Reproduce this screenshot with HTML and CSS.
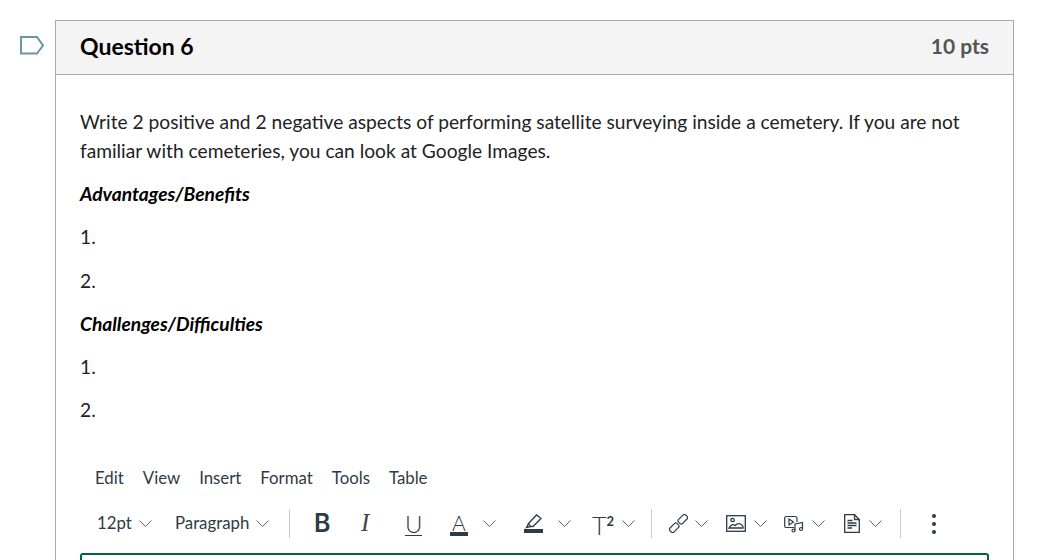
FILE: index.html
```html
<!DOCTYPE html>
<html lang="en">
<head>
  <meta charset="UTF-8" />
  <title>Question 6</title>
  <link rel="stylesheet" href="styles.css">
</head>
<body>
  <div class="page">
    <div class="flag-col">
      <svg class="flag" width="26" height="21" viewBox="0 0 26 21">
        <path d="M2 2H18L24 10.500L18 18.500H2Z" fill="#fff" stroke="#6d93ad" stroke-width="2"/>
      </svg>
    </div>
    <div class="question">
      <div class="question-header">
        <h2>Question 6</h2>
        <span class="pts">10 pts</span>
      </div>
      <div class="question-body">
        <p>Write 2 positive and 2 negative aspects of performing satellite surveying inside a cemetery. If you are not familiar with cemeteries, you can look at Google Images.</p>
        <p class="head"><strong><em>Advantages/Benefits</em></strong></p>
        <p>1.</p>
        <p>2.</p>
        <p class="head"><strong><em>Challenges/Difficulties</em></strong></p>
        <p>1.</p>
        <p>2.</p>

        <div class="menubar">
          <span>Edit</span><span>View</span><span>Insert</span><span>Format</span><span>Tools</span><span>Table</span>
        </div>

        <div class="toolbar">
          <div class="tb-group">
            <span class="tb-select size">12pt <svg class="chev" viewBox="0 0 13 7"><path d="M.5.5L6.500 6.500L12.500.5"/></svg></span>
            <span class="tb-select para">Paragraph <svg class="chev" viewBox="0 0 13 7"><path d="M.5.5L6.500 6.500L12.500.5"/></svg></span>
          </div>
          <div class="tb-group format">
            <span class="tb-btn bold">B</span>
            <span class="tb-btn ital">I</span>
            <span class="tb-btn under"><span class="under-mark">U</span></span>
            <span class="tb-btn color">
              <span class="color-mark">A</span>
              <svg class="chev" viewBox="0 0 13 7"><path d="M.5.5L6.500 6.500L12.500.5"/></svg>
            </span>
            <span class="tb-btn marker">
              <svg width="19" height="19" viewBox="0 0 19 19">
                <path d="M4.500 9.500L12.500 1L17 4.500L9 12.500H6.500ZM4.500 9.500L6.500 12.500L2.500 13.500Z" fill="none" stroke="#2d3b45" stroke-width="1.300"/>
                <rect y="15" width="19" height="4" fill="#2d3b45"/>
              </svg>
              <svg class="chev" viewBox="0 0 13 7"><path d="M.5.5L6.500 6.500L12.500.5"/></svg>
            </span>
            <span class="tb-btn sup">
              <span class="sup-mark">T<sup>2</sup></span>
              <svg class="chev" viewBox="0 0 13 7"><path d="M.5.5L6.500 6.500L12.500.5"/></svg>
            </span>
          </div>
          <div class="tb-group insert">
            <span class="tb-btn link">
              <svg width="19" height="19" viewBox="0 0 19 19" fill="none" stroke="#2d3b45" stroke-width="1.200">
                <rect x="-5" y="-2.800" width="10" height="5.600" rx="1.600" transform="translate(5.200 13.800) rotate(-45)"/>
                <rect x="-5" y="-2.800" width="10" height="5.600" rx="1.600" transform="translate(13.800 5.200) rotate(-45)"/>
              </svg>
              <svg class="chev" viewBox="0 0 13 7"><path d="M.5.5L6.500 6.500L12.500.5"/></svg>
            </span>
            <span class="tb-btn image">
              <svg width="20" height="17" viewBox="0 0 20 17" fill="none" stroke="#2d3b45" stroke-width="1.300">
                <rect x=".7" y=".7" width="18.600" height="15.600"/>
                <circle cx="6.500" cy="5" r="1.700"/>
                <path d="M3 13C5 9.500 7 9 9 10.500C12 7.500 15 8 17 11.500V13Z"/>
              </svg>
              <svg class="chev" viewBox="0 0 13 7"><path d="M.5.5L6.500 6.500L12.500.5"/></svg>
            </span>
            <span class="tb-btn video">
              <svg width="20" height="18" viewBox="0 0 20 18" fill="none" stroke="#2d3b45" stroke-width="1.200">
                <path d="M10 12.500H2.500C1.300 12.500.7 12 .7 11V3C.7 2 1.300 1.500 2.500 1.500H11C12.200 1.500 13 2 13 3.500V7"/>
                <path d="M5 4L9.500 7L5 10Z"/>
                <path d="M11 15.500V9L18.500 7.500V14"/>
                <circle cx="9.500" cy="15.500" r="1.500"/>
                <circle cx="17" cy="14" r="1.500"/>
              </svg>
              <svg class="chev" viewBox="0 0 13 7"><path d="M.5.5L6.500 6.500L12.500.5"/></svg>
            </span>
            <span class="tb-btn doc">
              <svg width="16" height="19" viewBox="0 0 16 19" fill="none" stroke="#2d3b45" stroke-width="1.300">
                <path d="M.7.7H10.500L15.300 5.500V18.300H.7Z"/>
                <path d="M10.500.7V5.500H15.300"/>
                <path d="M3.500 6.500H8.500M3.500 9H12.500M3.500 11.500H12.500M3.500 14H8" stroke-width="1.400"/>
              </svg>
              <svg class="chev" viewBox="0 0 13 7"><path d="M.5.5L6.500 6.500L12.500.5"/></svg>
            </span>
          </div>
          <div class="tb-group more">
            <i></i><i></i><i></i>
          </div>
        </div>

        <div class="editor"></div>
      </div>
    </div>
  </div>
</body>
</html>
```

FILE: styles.css
```css
html, body {
  height: 560px;
  overflow: hidden;
}
body {
  margin: 0;
  background-color: white;
  font-family: Lato, sans-serif;
  color: #2d3b45;
}
.page {
  display: flex;
  padding: 20px 37px 0 19px;
}
.flag-col {
  width: 36px;
  flex: none;
  padding-top: 15px;
}
.flag {
  display: block;
}
.question {
  flex: 1;
  border: 1px solid #aaa;
  border-bottom: none;
}
.question-header {
  display: flex;
  justify-content: space-between;
  align-items: center;
  height: 49px;
  padding: 0 24px 4px;
  background-color: #f4f4f4;
  border-bottom: 1px solid #aaa;
}
.question-header h2 {
  margin: 0;
  font-size: 23px;
  font-weight: 700;
  color: #000;
}
.pts {
  font-size: 21px;
  font-weight: 700;
  color: #555;
}
.question-body {
  padding: 33.300px 24px 0;
  font-size: 19.2px;
  line-height: 28.8px;
}
.question-body p {
  margin: 0 0 14.4px;
  color: #222;
}
.question-body p.head {
  color: #000;
}
.menubar {
  display: flex;
  gap: 19px;
  padding-left: 15px;
  font-size: 16.8px;
  line-height: 29px;
  margin-top: 37.700px;
}
.toolbar {
  display: flex;
  align-items: center;
  height: 32px;
  margin-top: 16px;
  padding-left: 17px;
  font-size: 16.8px;
}
.tb-group {
  display: flex;
  align-items: center;
  height: 29px;
  border-right: 1px solid #c7cdd1;
}
.tb-select {
  display: flex;
  align-items: center;
  gap: 7px;
}
.tb-select.size {
  width: 78px;
}
.tb-select.para {
  width: 114px;
}
.chev {
  width: 13px;
  height: 7px;
  flex: none;
  fill: none;
  stroke: #5b6770;
  stroke-width: 1;
}
.tb-btn {
  display: flex;
  align-items: center;
  box-sizing: border-box;
}
.format {
  width: 362px;
  padding-left: 24px;
  box-sizing: border-box;
}
.bold {
  width: 47px;
  font-family: Inter, sans-serif;
  font-size: 25px;
  font-weight: 600;
}
.ital {
  width: 45px;
  font-size: 25px;
  font-style: italic;
  font-family: "Liberation Serif", serif;
  color: #444;
}
.under {
  width: 44px;
  font-size: 24px;
  font-weight: 300;
}
.under-mark {
  line-height: 20px;
  margin-left: -1px;
  margin-top: 2px;
  border-bottom: 1px solid #2d3b45;
  padding-bottom: 1px;
}
.color {
  width: 74px;
  gap: 15px;
  font-size: 21px;
  font-weight: 300;
}
.color-mark {
  width: 18px;
  line-height: 18px;
  text-align: center;
  border-bottom: 4px solid #2d3b45;
  margin-top: 2px;
}
.marker {
  width: 68px;
  gap: 15px;
}
.sup {
  gap: 8px;
  font-size: 25px;
  font-weight: 300;
}
.sup-mark {
  line-height: 20px;
  margin-top: 3px;
}
.sup-mark sup {
  font-size: 13px;
  font-weight: 700;
  line-height: 0;
  vertical-align: 9px;
}
.insert {
  width: 249px;
  padding-left: 17px;
  box-sizing: border-box;
}
.link {
  width: 57px;
  gap: 7px;
}
.image {
  width: 58px;
  gap: 8px;
}
.video {
  width: 60px;
  gap: 8px;
}
.doc {
  gap: 9px;
}
.more {
  flex-direction: column;
  justify-content: center;
  gap: 4px;
  border: none;
  padding-left: 31px;
}
.more i {
  width: 4px;
  height: 4px;
  border-radius: 50%;
  background-color: #2d3b45;
}
.editor {
  height: 5px;
  margin-top: 13px;
  border: 2px solid #00633d;
  border-bottom: none;
  border-radius: 3px 3px 0 0;
}
```
